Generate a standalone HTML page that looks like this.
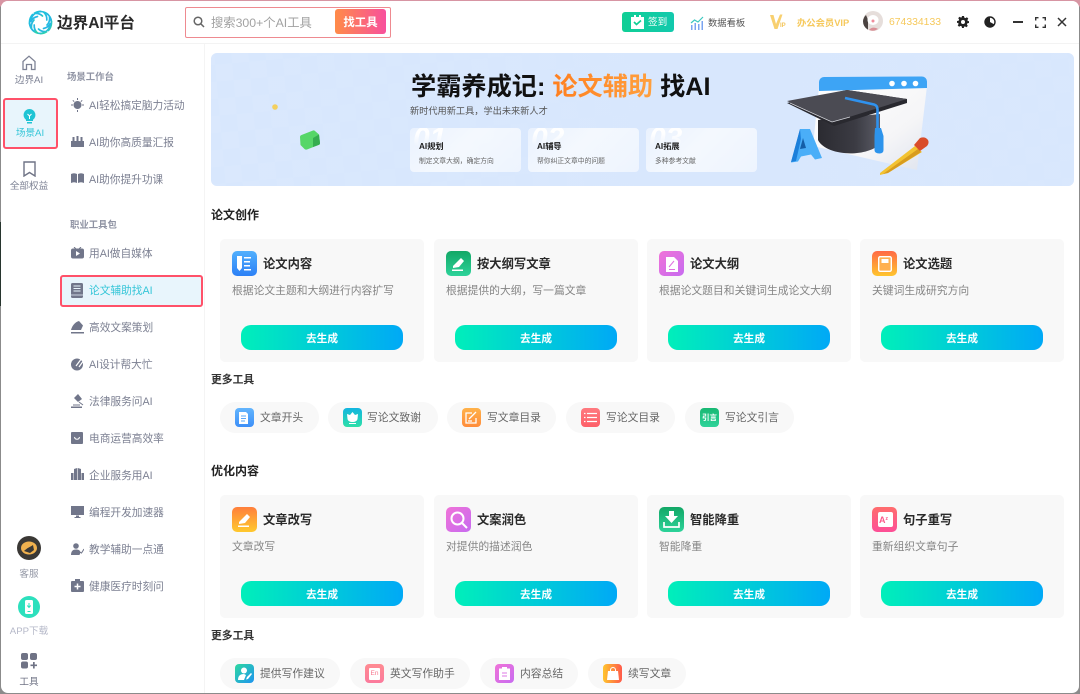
<!DOCTYPE html>
<html lang="zh"><head><meta charset="utf-8"><title>边界AI平台</title>
<style>
*{box-sizing:border-box;margin:0;padding:0}
html,body{width:1080px;height:694px;overflow:hidden}
body{position:relative;font-family:"Liberation Sans","Noto Sans CJK SC",sans-serif;background:linear-gradient(180deg,#d795a3 0,#d795a3 6px,#8b8b8b 7px,#8b8b8b 100%)}
#strip{position:absolute;left:0;top:222px;width:1px;height:84px;background:#27352e}
#w{position:absolute;left:1px;top:1px;width:1078px;height:692px;background:#fff;border-radius:7px;overflow:hidden;filter:blur(.35px)}
.a{position:absolute;white-space:nowrap}
.t{position:absolute;white-space:nowrap;line-height:16px;height:16px}
svg{position:absolute;display:block}
.rail{font-size:9.6px;color:#7d8294;text-align:center;width:56px;left:0}
.h{font-size:9.4px;font-weight:700;color:#8f93a3}
.m{font-size:10.7px;color:#7c8092;left:88px}
.card{position:absolute;width:204px;height:123px;background:#f8f8f8;border-radius:5px}
.ci{position:absolute;left:12px;top:12px;width:25px;height:25px;border-radius:5px}
.ct{position:absolute;left:43px;top:17px;font-size:12.3px;font-weight:700;color:#2a2a2a;line-height:17px;white-space:nowrap}
.cd{position:absolute;left:12px;top:44px;font-size:10.8px;color:#858585;line-height:16px;white-space:nowrap}
.b{position:absolute;left:21px;top:86px;width:162px;height:25px;border-radius:10px;background:linear-gradient(90deg,#00efba,#00a9f6);color:#fff;font-size:10.7px;font-weight:700;text-align:center;line-height:28px}
.p{position:absolute;height:31px;border-radius:16px;background:#f8f8f8;font-size:10.8px;color:#666;line-height:33px;padding-left:40px;white-space:nowrap}
.pi{position:absolute;left:15px;top:6px;width:19px;height:19px;border-radius:4px}
.sec{font-size:12px;font-weight:700;color:#222;left:210px}
.more{font-size:10.8px;font-weight:700;color:#333;left:210px}
.bc{position:absolute;top:127px;width:111px;height:44px;border-radius:4px;background:linear-gradient(135deg,rgba(255,255,255,.45),rgba(255,255,255,.72) 45%,rgba(255,255,255,.55));overflow:hidden}
.bc i{position:absolute;left:3px;top:-4px;font:italic 700 30px/30px "Liberation Sans",sans-serif;letter-spacing:0;background:linear-gradient(180deg,#fff 30%,rgba(255,255,255,0) 75%);-webkit-background-clip:text;background-clip:text;color:transparent}
.bc b{position:absolute;left:9px;top:13px;font-size:8.2px;line-height:12px;color:#1d1d1d;white-space:nowrap}
.bc span{position:absolute;left:9px;top:29px;font-size:6.8px;line-height:10px;color:#666;white-space:nowrap}
</style></head><body>
<div id="strip"></div>
<div id="w">
<!-- header -->
<div class="a" style="left:0;top:0;width:1078px;height:43px;background:#fff;border-bottom:1px solid #f3f3f3"></div>
<svg style="left:27px;top:9px" width="25" height="25" viewBox="0 0 25 25" fill="none"><defs><linearGradient id="lg" x1="0" y1="0" x2="1" y2="1"><stop offset="0" stop-color="#1cc7d8"/><stop offset=".55" stop-color="#27b5e6"/><stop offset="1" stop-color="#2fdc9a"/></linearGradient></defs>
<g stroke="url(#lg)" stroke-width="1.700" fill="none" stroke-linecap="round"><path d="M12.500 1.500C7 2 3 6 2.500 12c1.500-3 4-5 7-5.500"/><path d="M20 4.500C16 1 10.500 .5 6 3.500c3.500-.5 6.500 .5 8.500 2.500"/><path d="M23.500 12C23 7 20 3.500 15.500 2c2.300 2 3.500 5 3.300 8"/><path d="M20.500 20.500c3.500-4 4-9.500 1-14 .5 3.500-.5 6.500-2.500 8.500"/><path d="M12.500 23.500c5.500-.5 9.500-4.500 10-10.500-1.500 3-4 5-7 5.500"/><path d="M5 20.500c4 3.500 9.500 4 14 1-3.500 .5-6.500-.5-8.500-2.500"/><path d="M1.500 13c.5 5 3.500 8.500 8 10-2.300-2-3.500-5-3.300-8"/><path d="M4.500 4.500c-3.500 4-4 9.500-1 14-.5-3.500 .5-6.500 2.500-8.500"/></g></svg>
<div class="t" style="left:56px;top:13px;font-size:15.6px;font-weight:700;color:#2a2a2a;line-height:20px;height:20px">边界AI平台</div>
<div class="a" style="left:184px;top:6px;width:206px;height:31px;border:1px solid #ee8a90;border-radius:2px"></div>
<svg style="left:192px;top:15px" width="12" height="12" viewBox="0 0 12 12" fill="none" stroke="#666" stroke-width="1.500"><circle cx="5" cy="5" r="3.800"/><path d="M8 8l3 3"/></svg>
<div class="t" style="left:210px;top:14px;font-size:12.3px;color:#a2a2a2">搜索300+个AI工具</div>
<div class="a" style="left:334px;top:8px;width:51px;height:25px;border-radius:3px;background:linear-gradient(90deg,#ff8b48,#f8509c);color:#fff;font-size:11.400px;font-weight:700;text-align:center;line-height:28px">找工具</div>
<div class="a" style="left:621px;top:11px;width:52px;height:20px;border-radius:3px;background:linear-gradient(90deg,#10cf95,#12c9ad)"></div>
<svg style="left:629px;top:14px" width="15" height="14" viewBox="0 0 15 14"><path d="M1 2h3V0h2v2h3V0h2v2h3v12H1z" fill="#fff"/><path d="M4 7l2.500 2.500L11 5.500" stroke="#10cf95" stroke-width="1.700" fill="none"/></svg>
<div class="t" style="left:647px;top:14px;font-size:9.600px;color:#fff">签到</div>
<svg style="left:689px;top:15px" width="15" height="14" viewBox="0 0 15 14"><path d="M1 14V9h1.500v5zM4.500 14V7H6v7zM8 14V8h1.500v6zM11.500 14V5H13v9z" fill="#7aa4f0"/><path d="M1 7l3.500-3L8 6l5-5" stroke="#3cc9c0" stroke-width="1.200" fill="none"/></svg>
<div class="t" style="left:707px;top:14px;font-size:9.300px;color:#555">数据看板</div>
<svg style="left:769px;top:13px" width="18" height="17" viewBox="0 0 18 17"><path d="M0 1h3.500L6 10l4-9.500h2.500L7.500 15H4.500z" fill="#f8d070"/></svg>
<div class="t" style="left:779px;top:21px;font-size:6px;line-height:8px;height:8px;color:#f4c65c;font-weight:700">IP</div>
<div class="t" style="left:796px;top:14px;font-size:9.300px;color:#f6c95c;font-weight:700">办公会员VIP</div>
<svg style="left:862px;top:10px" width="20" height="20" viewBox="0 0 20 20"><circle cx="10" cy="10" r="10" fill="#e6dedb"/><path d="M0 10a10 10 0 0 0 5 8.700L5 9 3 4A10 10 0 0 0 0 10z" fill="#4b4341"/><ellipse cx="10" cy="9" rx="5.500" ry="5" fill="#fff"/><circle cx="10" cy="10" r="1.500" fill="#ef8d9b"/><path d="M6 19c2-3 6-3 9-1a10 10 0 0 1-9 1z" fill="#d98f96"/></svg>
<div class="t" style="left:888px;top:14px;font-size:10.400px;color:#f6c95c">674334133</div>
<svg style="left:956px;top:15px" width="12" height="12" viewBox="0 0 12 12"><path d="M5 0h2l.3 1.600 1.200.5L9.900 1.200l1.400 1.400-.9 1.400.5 1.200L12 5v2l-1.600.3-.5 1.200.9 1.400-1.400 1.400-1.400-.9-1.200.5L7 12H5l-.3-1.600-1.200-.5-1.400.9L.7 9.400l.9-1.400-.5-1.200L0 7V5l1.600-.3.5-1.200-.9-1.400L2.600.7 4 1.600l.7-.3z" fill="#222"/><circle cx="6" cy="6" r="2" fill="#fff"/></svg>
<svg style="left:983px;top:15px" width="12" height="12" viewBox="0 0 12 12"><circle cx="6" cy="6" r="5" fill="none" stroke="#222" stroke-width="1.400"/><path d="M6 .8V6l4.500 2.500A5.200 5.200 0 0 1 1 7.500 5.200 5.200 0 0 1 6 .8z" fill="#222"/></svg>
<div class="a" style="left:1012px;top:20px;width:10px;height:2px;background:#333"></div>
<svg style="left:1034px;top:16px" width="11" height="11" viewBox="0 0 11 11" fill="none" stroke="#333" stroke-width="1.400"><path d="M.7 3.500V.7h2.800M7.500.7h2.800v2.800M10.300 7.500v2.800H7.500M3.500 10.300H.7V7.500"/></svg>
<svg style="left:1056px;top:16px" width="10" height="10" viewBox="0 0 10 10" stroke="#333" stroke-width="1.500"><path d="M1 1l8 8M9 1l-8 8"/></svg>

<!-- sidebar -->
<div class="a" style="left:203px;top:43px;width:1px;height:650px;background:#f4f4f4"></div>
<svg style="left:21px;top:54px" width="14" height="16" viewBox="0 0 14 16" fill="none" stroke="#7d8294" stroke-width="1.300"><path d="M1 6.500L7 1.200l6 5.300V14.500H9.500V9.500h-5v5H1z"/></svg>
<div class="t rail" style="top:72px">边界AI</div>
<div class="a" style="left:2px;top:97px;width:55px;height:51px;background:#e8f5fc;border:2px solid #ff5169;border-radius:3px"></div>
<svg style="left:22px;top:108px" width="13" height="15" viewBox="0 0 13 15"><path d="M6.500 0a6 6 0 0 1 3.500 10.800V12H3v-1.200A6 6 0 0 1 6.500 0z" fill="#1fc4d4"/><path d="M4 13h5v1.500H4z" fill="#1fc4d4"/><path d="M4.500 5l2 2 2-2M6.500 7v3" stroke="#fff" stroke-width="1" fill="none"/></svg>
<div class="t rail" style="top:125px;color:#35c6d8;left:1px">场景AI</div>
<svg style="left:22px;top:160px" width="13" height="16" viewBox="0 0 13 16" fill="none" stroke="#6f7385" stroke-width="1.400"><path d="M1 1h11v14l-5.500-3.500L1 15z"/></svg>
<div class="t rail" style="top:178px">全部权益</div>

<div class="t h" style="left:66px;top:68px">场景工作台</div>
<div class="t h" style="left:69px;top:216px">职业工具包</div>

<div class="t m" style="top:97px">AI轻松搞定脑力活动</div>
<svg style="left:70px;top:97px" width="13" height="14" viewBox="0 0 13 14"><circle cx="6.500" cy="7" r="4" fill="#71768a"/><path d="M6.500 0v2M0 7h2M11 7h2M1.800 2.300l1.400 1.400M11.200 2.300L9.800 3.700M6.500 12v2" stroke="#71768a"/></svg>
<div class="t m" style="top:134px">AI助你高质量汇报</div>
<svg style="left:70px;top:135px" width="13" height="11" viewBox="0 0 13 11" fill="#71768a"><path d="M0 5h13v6H0z"/><path d="M1.500 1h2v4h-2zM5.500 0h2v5h-2zM9.500 1h2v4h-2z"/></svg>
<div class="t m" style="top:171px">AI助你提升功课</div>
<svg style="left:70px;top:172px" width="13" height="10" viewBox="0 0 13 10" fill="#71768a"><path d="M0 1c2-1 4-1 6 0v9c-2-1-4-1-6 0zM7 1c2-1 4-1 6 0v9c-2-1-4-1-6 0z"/></svg>
<div class="t m" style="top:245px">用AI做自媒体</div>
<svg style="left:70px;top:246px" width="13" height="12" viewBox="0 0 13 12"><rect y="1.500" width="13" height="10" rx="2" fill="#71768a"/><path d="M5 4v5l4-2.500z" fill="#fff"/><path d="M3 0l2 2M10 0L8 2" stroke="#71768a"/></svg>
<div class="a" style="left:59px;top:274px;width:143px;height:32px;background:#e8f5fc;border:2px solid #ff5169;border-radius:3px"></div>
<div class="t m" style="top:282px;color:#35c6d8">论文辅助找AI</div>
<svg style="left:70px;top:282px" width="12" height="15" viewBox="0 0 12 15"><rect width="12" height="15" rx="1.500" fill="#71768a"/><path d="M2.500 3h7M2.500 5.500h7M2.500 8h7" stroke="#e8f5fc"/><path d="M0 12h12" stroke="#e8f5fc" stroke-width=".7"/></svg>
<div class="t m" style="top:319px">高效文案策划</div>
<svg style="left:70px;top:320px" width="13" height="13" viewBox="0 0 13 13" fill="#71768a"><path d="M0 9C1 5 4 1 8 0l4 4.500-2 4.500z"/><path d="M0 11h13v1.500H0z"/></svg>
<div class="t m" style="top:356px">AI设计帮大忙</div>
<svg style="left:70px;top:356px" width="13" height="14" viewBox="0 0 13 14"><circle cx="6" cy="7.500" r="6" fill="#71768a"/><path d="M5 9l6-8M8 10l5-7" stroke="#fff" stroke-width="1.200"/></svg>
<div class="t m" style="top:393px">法律服务问AI</div>
<svg style="left:70px;top:393px" width="13" height="14" viewBox="0 0 13 14" fill="#71768a"><path d="M3 4l4-4 4 5-4 3z"/><path d="M8 8l4 3" stroke="#71768a"/><path d="M0 12.500h11V14H0zM2 10.500h7v1H2z"/></svg>
<div class="t m" style="top:430px">电商运营高效率</div>
<svg style="left:70px;top:431px" width="12" height="12" viewBox="0 0 12 12"><path d="M1 0h10a1 1 0 0 1 1 1v10a1 1 0 0 1-1 1H1a1 1 0 0 1-1-1V1a1 1 0 0 1 1-1z" fill="#71768a"/><path d="M3.500 5c.5 3 4.500 3 5 0" stroke="#fff" fill="none"/></svg>
<div class="t m" style="top:467px">企业服务用AI</div>
<svg style="left:70px;top:467px" width="13" height="12" viewBox="0 0 13 12" fill="#71768a"><path d="M3 12V1l3.200-1v12zM6.800 12V0L10 1v11zM0 12V5h2.500v7zM10.500 12V5H13v7z"/></svg>
<div class="t m" style="top:504px">编程开发加速器</div>
<svg style="left:70px;top:505px" width="13" height="12" viewBox="0 0 13 12" fill="#71768a"><path d="M0 0h13v9H0zM5 9.500h3V11H5zM3.500 11h6v1h-6z"/></svg>
<div class="t m" style="top:541px">教学辅助一点通</div>
<svg style="left:70px;top:542px" width="13" height="12" viewBox="0 0 13 12" fill="#71768a"><circle cx="5" cy="3" r="2.800"/><path d="M0 12c0-4 2-5.500 5-5.500s4 1 4.500 3L8.500 12z"/><path d="M9 9l1.500 1L13 6" stroke="#71768a" fill="none"/></svg>
<div class="t m" style="top:578px">健康医疗时刻问</div>
<svg style="left:70px;top:578px" width="13" height="13" viewBox="0 0 13 13"><path d="M4 2V0h5v2h3a1 1 0 0 1 1 1v9a1 1 0 0 1-1 1H1a1 1 0 0 1-1-1V3a1 1 0 0 1 1-1z" fill="#71768a"/><path d="M6.500 4.500v6M3.500 7.500h6" stroke="#fff" stroke-width="1.500"/></svg>

<svg style="left:14px;top:533px" width="28" height="28" viewBox="0 0 28 28"><circle cx="14" cy="14" r="12" fill="#3a3835"/><ellipse cx="14" cy="14" rx="8" ry="6.500" fill="#f0b14e"/><path d="M9 17c3-3 6-4 9-6l1 5-4 3z" fill="#3a3835"/></svg>
<div class="t rail" style="top:566px;color:#9498a6">客服</div>
<svg style="left:17px;top:595px" width="22" height="22" viewBox="0 0 22 22"><circle cx="11" cy="11" r="11" fill="#2de0bd"/><rect x="7" y="4" width="8" height="14" rx="1.500" fill="#fff"/><path d="M11 7v4M9.300 9.500L11 11.500l1.700-2" stroke="#2de0bd" fill="none"/><path d="M9.500 15.500h3" stroke="#2de0bd"/></svg>
<div class="t rail" style="top:623px;color:#b5b8c8">APP下载</div>
<svg style="left:20px;top:652px" width="17" height="16" viewBox="0 0 17 16" fill="#6f7385"><rect width="7" height="7" rx="2"/><rect x="9" width="7" height="7" rx="2"/><rect y="8.500" width="7" height="7" rx="2"/><path d="M12 9h1.700v2.500H16v1.600h-2.300V15.500H12V13.100H9.500V11.500H12z"/></svg>
<div class="t rail" style="top:674px;color:#6f7385">工具</div>

<!-- banner -->
<div class="a" style="left:210px;top:52px;width:863px;height:133px;border-radius:6px;background:#d8e7fd;overflow:hidden">
<div class="a" style="left:-40px;top:-60px;width:960px;height:260px;background:repeating-conic-gradient(rgba(255,255,255,.06) 0 25%,transparent 0 50%) 0 0/34px 34px;transform:rotate(-5deg)"></div>
<div class="a" style="left:0;top:0;right:0;bottom:0;background:linear-gradient(90deg,rgba(216,231,253,.2),rgba(216,231,253,.8) 55%,rgba(216,231,253,.6))"></div>
</div>
<svg style="left:268px;top:100px" width="10" height="10"><circle cx="6" cy="6" r="2.800" fill="#f3cf5e"/></svg>
<svg style="left:297px;top:128px" width="24" height="22" viewBox="0 0 24 22"><path d="M2 8Q2 6.500 3.500 6L15 1.500Q16 1 17 2L21 5.500 22 14Q22 15.500 20.500 16L9 20.500Q7.500 21 6.500 20L2.500 16z" fill="#56d668"/><path d="M15 9L21 5.500 22 14Q22 15.500 20.500 16L15 18z" fill="#36ad50"/></svg>
<div class="t" style="left:410px;top:69px;font-size:25.200px;font-weight:700;line-height:34px;height:34px;color:#111">学霸养成记: <span style="background:linear-gradient(90deg,#ff7f1f,#ffa03e);-webkit-background-clip:text;background-clip:text;color:transparent">论文辅助</span> 找AI</div>
<div class="t" style="left:409px;top:102px;font-size:9.200px;color:#555">新时代用新工具，学出未来新人才</div>
<div class="bc" style="left:409px"><i>01</i><b>AI规划</b><span>制定文章大纲，确定方向</span></div>
<div class="bc" style="left:527px"><i>02</i><b>AI辅导</b><span>帮你纠正文章中的问题</span></div>
<div class="bc" style="left:645px"><i>03</i><b>AI拓展</b><span>多种参考文献</span></div>
<svg style="left:769px;top:69px" width="170" height="110" viewBox="0 0 170 110">
<defs><linearGradient id="win" x1="0" y1="0" x2="1" y2="1"><stop offset="0" stop-color="#fff"/><stop offset=".65" stop-color="#f5f5f7"/><stop offset="1" stop-color="#dfe4ee"/></linearGradient>
<linearGradient id="capb" x1="0" y1="0" x2="1" y2="0"><stop offset="0" stop-color="#2b2b31"/><stop offset=".6" stop-color="#3b3b43"/><stop offset="1" stop-color="#5b5c66"/></linearGradient></defs>
<path d="M49 18L157 16 147 100 43 76z" fill="url(#win)"/>
<path d="M49 12a5 5 0 0 1 5-5l98-.5a5 5 0 0 1 5 5V18L49 21z" fill="#3da4f5"/>
<circle cx="122" cy="13.500" r="2.800" fill="#fff"/><circle cx="134" cy="13.500" r="2.800" fill="#fff"/><circle cx="145.500" cy="13.500" r="2.800" fill="#fff"/>
<path d="M48 50V70C56 86 96 88 110 74V44z" fill="url(#capb)"/>
<path d="M17 33L77 20l60 9v4L64 56z" fill="#29292f"/>
<path d="M17 31L77 20l60 9-74 23z" fill="#4b4b53"/>
<path d="M20 33l42 19 18-5" stroke="#d5d7dd" stroke-width=".8" fill="none"/>
<path d="M75 28l29 6.500q3.500 1 3.500 5V60" stroke="#2f92ee" stroke-width="2.600" fill="none"/>
<path d="M105 58h6l2.500 8v14q0 3.500-4 3.500-5 0-5-3.500V66z" fill="#2d94ec"/>
<path d="M30 59h10l12 29-7 1.500-4-5-10 2-3 5-7 1z" fill="#4aaef8"/><path d="M33 68l3 10-6 1z" fill="#145ea8"/><path d="M30 59L21 92l5-1 5-22z" fill="#1c7fda"/>
<path d="M110 103l35-27 7 6-34 21-8 2z" fill="#f3c331"/><path d="M113 104l35-25 3 3-33 21z" fill="#d89c1e"/>
<path d="M144 75l6-7q5-2 8 2 1.500 3-1 6l-7 5z" fill="#d94c2a"/>
</svg>

<!-- section 1 -->
<div class="t sec" style="top:206px">论文创作</div>
<div class="card" style="left:219px;top:238px"><div class="ci" style="background:linear-gradient(#52b0fd,#2c80f6)"></div><svg style="left:16px;top:16px" width="18" height="18" viewBox="0 0 18 18" fill="#fff"><path d="M1 1h5v12l-2.500 3L1 13z"/><path d="M8 2h7v1.500H8zM8 6h6v1.500H8zM8 10h6v1.500H8zM8 14h7v1.500H8z"/></svg><div class="ct">论文内容</div><div class="cd">根据论文主题和大纲进行内容扩写</div><div class="b">去生成</div></div>
<div class="card" style="left:433px;top:238px"><div class="ci" style="background:linear-gradient(#12a766,#2dd39a)"></div><svg style="left:17px;top:17px" width="16" height="16" viewBox="0 0 16 16" fill="#fff"><path d="M2 10l8-8 3 3-5 6-6 1z"/><path d="M1 13.500h11V15H1z"/></svg><div class="ct">按大纲写文章</div><div class="cd">根据提供的大纲，写一篇文章</div><div class="b">去生成</div></div>
<div class="card" style="left:646px;top:238px"><div class="ci" style="background:linear-gradient(135deg,#f073d8,#c76bf0)"></div><svg style="left:18px;top:17px" width="14" height="17" viewBox="0 0 14 17"><path d="M1 1h8l4 4v11H1z" fill="#fff"/><path d="M4 11l5-6M4 13.500h6" stroke="#e070e0" fill="none"/></svg><div class="ct">论文大纲</div><div class="cd">根据论文题目和关键词生成论文大纲</div><div class="b">去生成</div></div>
<div class="card" style="left:859px;top:238px"><div class="ci" style="background:linear-gradient(#ff6a45,#ffc52e)"></div><svg style="left:18px;top:17px" width="14" height="16" viewBox="0 0 14 16"><rect x=".7" y=".7" width="12.600" height="14.600" rx="1.500" fill="#ffb050" stroke="#fff" stroke-width="1.400"/><rect x="3.500" y="3" width="7" height="4" fill="#fff"/></svg><div class="ct">论文选题</div><div class="cd">关键词生成研究方向</div><div class="b">去生成</div></div>

<div class="t more" style="top:371px">更多工具</div>
<div class="p" style="left:219px;top:401px;width:99px"><div class="pi" style="background:linear-gradient(#63b5fd,#3d8ff8)"></div><svg style="left:19px;top:10px" width="11" height="12" viewBox="0 0 11 12"><path d="M0 0h7l2 2v10H0z" fill="#fff"/><path d="M2 4h5M2 6.500h5M2 9h4" stroke="#5aa8fa"/></svg>文章开头</div>
<div class="p" style="left:327px;top:401px;width:110px;padding-left:39px"><div class="pi" style="background:linear-gradient(#12b5e0,#2ee0a8)"></div><svg style="left:18px;top:10px" width="13" height="12" viewBox="0 0 13 12" fill="#fff"><path d="M1 2l3 1 2.500-3L9 3l3-1-.5 5C11 9 9 10 6.500 10S2 9 1.500 7zM3 11h7v1H3z"/></svg>写论文致谢</div>
<div class="p" style="left:446px;top:401px;width:109px"><div class="pi" style="background:linear-gradient(#ffb24a,#ff8c3a)"></div><svg style="left:18px;top:9px" width="13" height="13" viewBox="0 0 13 13" fill="none" stroke="#fff" stroke-width="1.300"><path d="M11 7v5H1V2h6"/><path d="M4 8l7-7M3 10h4" /></svg>写文章目录</div>
<div class="p" style="left:565px;top:401px;width:109px"><div class="pi" style="background:linear-gradient(#ff7a80,#fd5f68)"></div><svg style="left:18px;top:10px" width="13" height="11" viewBox="0 0 13 11" stroke="#fff" stroke-width="1.300"><path d="M3 1.500h10M3 5.500h10M3 9.500h10M0 1.500h1.500M0 5.500h1.500M0 9.500h1.500"/></svg>写论文目录</div>
<div class="p" style="left:684px;top:401px;width:109px"><div class="pi" style="background:linear-gradient(#18b873,#2fd39a)"></div><div class="a" style="left:17px;top:8px;font-size:7.500px;line-height:15px;color:#fff;font-weight:700">引言</div>写论文引言</div>

<!-- section 2 -->
<div class="t sec" style="top:462px">优化内容</div>
<div class="card" style="left:219px;top:494px"><div class="ci" style="background:linear-gradient(#ff7f3c,#ffc92e)"></div><svg style="left:17px;top:17px" width="16" height="16" viewBox="0 0 16 16" fill="#fff"><path d="M2 10l8-8 3 3-5 6-6 1z"/><path d="M1 13.500h11V15H1z"/></svg><div class="ct">文章改写</div><div class="cd">文章改写</div><div class="b">去生成</div></div>
<div class="card" style="left:433px;top:494px"><div class="ci" style="background:linear-gradient(135deg,#f073d8,#c76bf0)"></div><svg style="left:16px;top:16px" width="18" height="18" viewBox="0 0 18 18" fill="none" stroke="#fff" stroke-width="2"><circle cx="7.500" cy="7.500" r="6"/><path d="M12 12l5 5"/></svg><div class="ct">文案润色</div><div class="cd">对提供的描述润色</div><div class="b">去生成</div></div>
<div class="card" style="left:646px;top:494px"><div class="ci" style="background:linear-gradient(#12a766,#2dd39a)"></div><svg style="left:16px;top:16px" width="17" height="17" viewBox="0 0 17 17"><path d="M6 0h5v5h4l-6.500 7L2 5h4z" fill="#fff"/><path d="M1 11v5h15v-5" stroke="#fff" stroke-width="1.700" fill="none"/></svg><div class="ct">智能降重</div><div class="cd">智能降重</div><div class="b">去生成</div></div>
<div class="card" style="left:859px;top:494px"><div class="ci" style="background:linear-gradient(#ff6d6d,#fd4f97)"></div><div class="a" style="left:18px;top:17px;width:15px;height:15px;background:#fff;border-radius:2px;font-size:9px;font-weight:700;line-height:15px;color:#fb5a8a;padding-left:1px">A<span style="font-size:5px;vertical-align:3px">z</span></div><div class="ct">句子重写</div><div class="cd">重新组织文章句子</div><div class="b">去生成</div></div>

<div class="t more" style="top:627px">更多工具</div>
<div class="p" style="left:219px;top:657px;width:120px"><div class="pi" style="background:linear-gradient(135deg,#2ed9a0,#1e94f0)"></div><svg style="left:18px;top:9px" width="14" height="14" viewBox="0 0 14 14" fill="#fff"><circle cx="6" cy="3.500" r="3"/><path d="M0 13c0-4 2-6 6-6l2 1-2 5zM9 10l4-4 1 1-4 5-2 .5z"/></svg>提供写作建议</div>
<div class="p" style="left:349px;top:657px;width:120px"><div class="pi" style="background:linear-gradient(#ff8b92,#fb7a9c)"></div><div class="a" style="left:19px;top:10px;width:11px;height:12px;background:#fff;border-radius:1px;font-size:6.500px;line-height:12px;color:#f7758c;text-align:center">En</div>英文写作助手</div>
<div class="p" style="left:479px;top:657px;width:98px"><div class="pi" style="background:linear-gradient(135deg,#f073d8,#c76bf0)"></div><svg style="left:19px;top:9px" width="11" height="13" viewBox="0 0 11 13"><path d="M0 1.500h3V0h5v1.500h3V13H0z" fill="#fff"/><path d="M3 6h5M3 9h5" stroke="#dc78e4"/></svg>内容总结</div>
<div class="p" style="left:587px;top:657px;width:98px"><div class="pi" style="background:linear-gradient(90deg,#ffc52e,#ff5a4a)"></div><svg style="left:19px;top:9px" width="12" height="13" viewBox="0 0 12 13"><path d="M1 4h10l1 9H0z" fill="#fff"/><path d="M3.500 5V3a2.500 2.500 0 0 1 5 0v2" stroke="#fff" fill="none"/></svg>续写文章</div>
</div>
</body></html>
